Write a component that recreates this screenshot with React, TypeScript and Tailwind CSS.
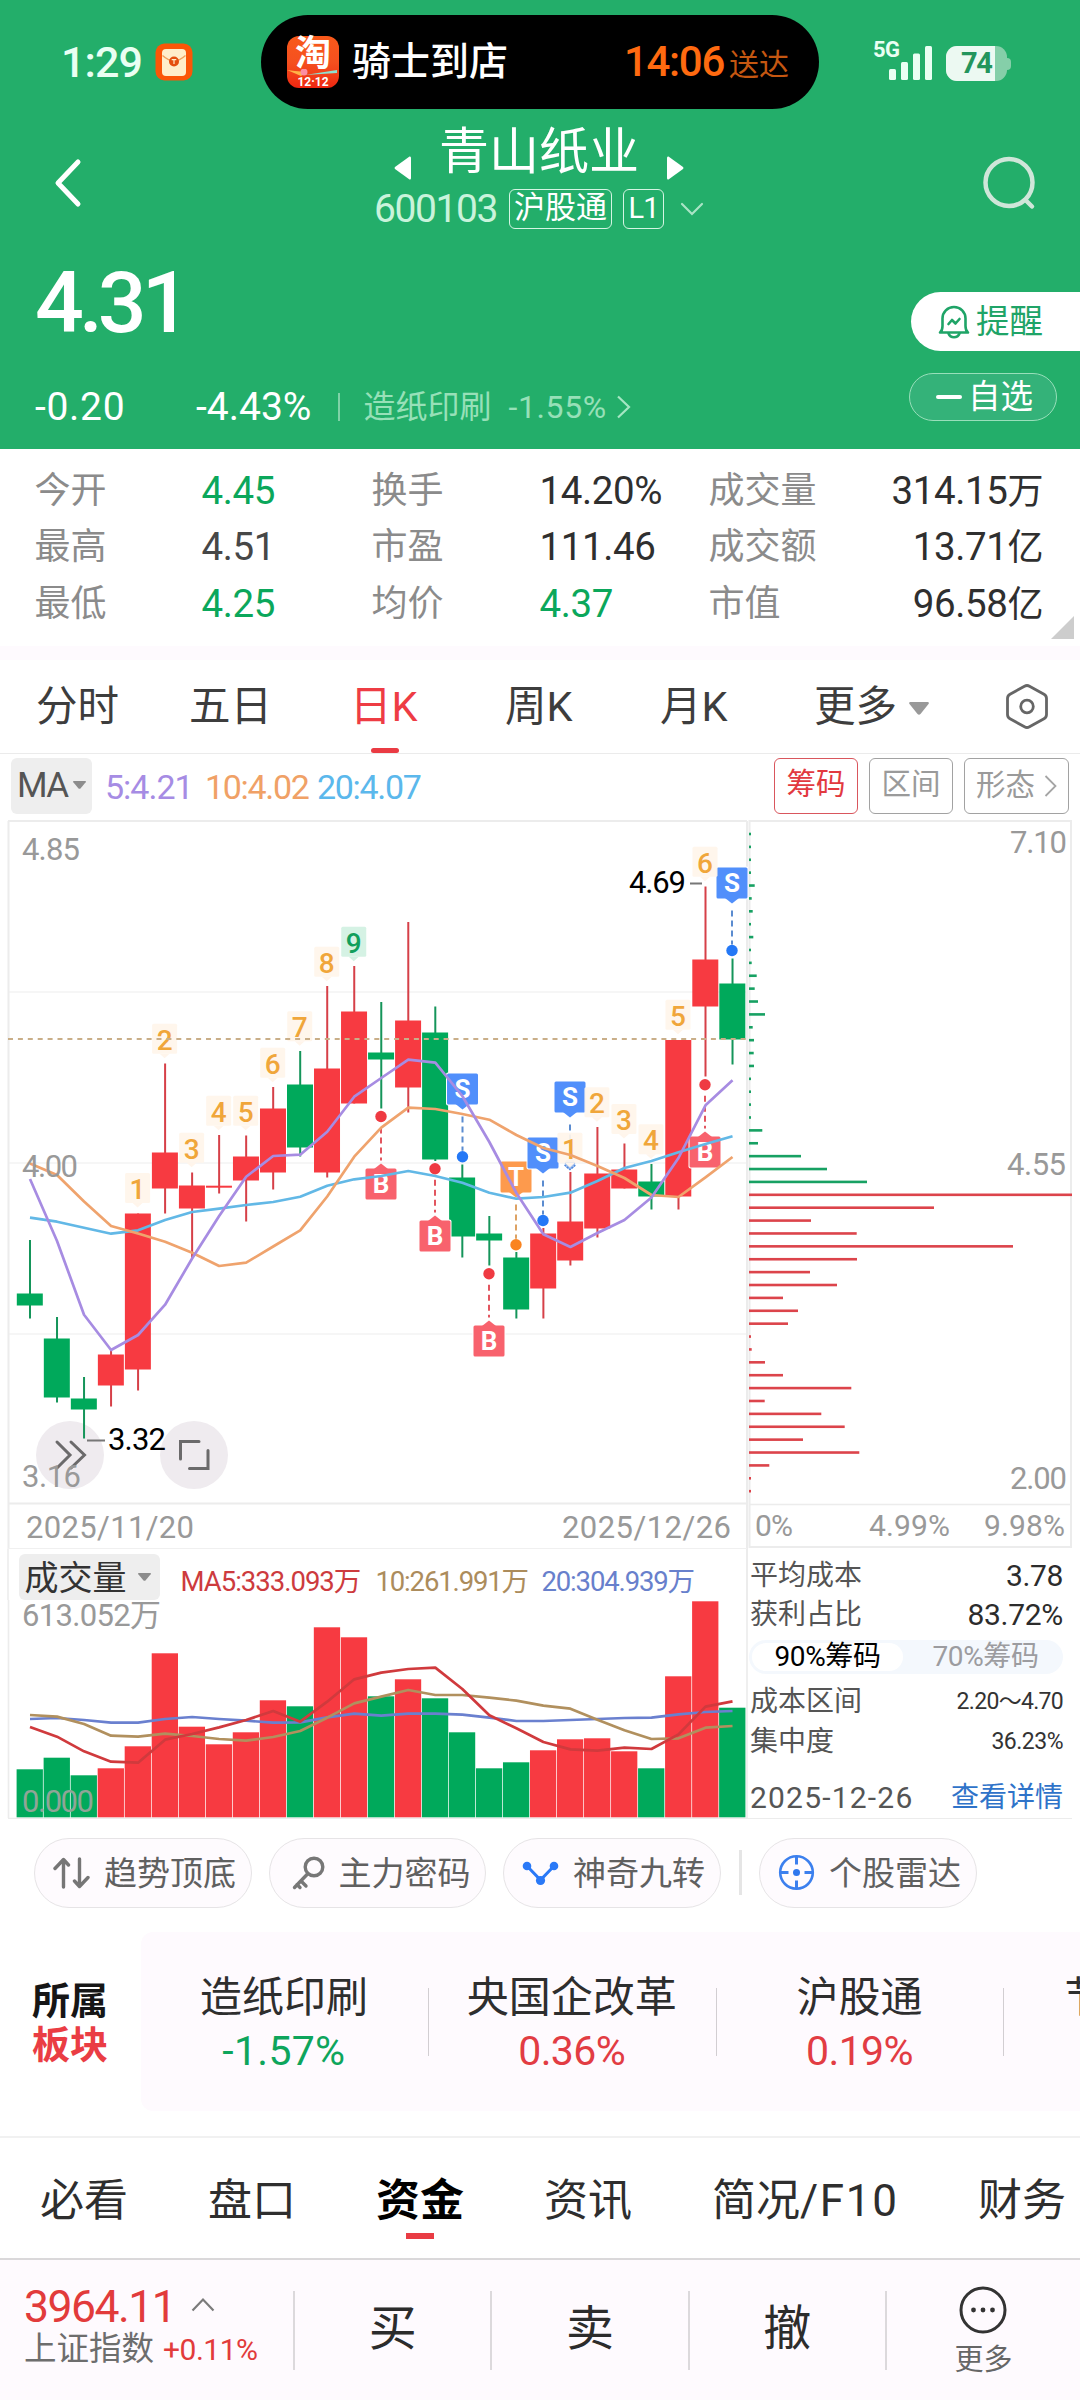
import React from "react";

const RED = "#f73a41";
const GREEN = "#00a95b";

/* ---------- chart data (plot coordinates) ---------- */

type Candle = [up: boolean, high: number, top: number, bottom: number, low: number];

const candles: Candle[] = [
  [false, 1240, 1293.5, 1305.5, 1318.5],
  [false, 1317, 1338.5, 1397.5, 1402.5],
  [false, 1377, 1398.5, 1409.5, 1438.5],
  [true, 1351, 1354.5, 1385.5, 1406.5],
  [true, 1213.5, 1213.5, 1369.5, 1390.5],
  [true, 1063.5, 1152.5, 1188.5, 1213.5],
  [true, 1172.5, 1185.5, 1208.5, 1258],
  [true, 1135, 1185.7, 1187.7, 1193.5],
  [true, 1135.5, 1156.5, 1180.5, 1221.5],
  [true, 1087, 1108.5, 1172.5, 1189.5],
  [false, 1051, 1084.5, 1147.5, 1156.5],
  [true, 986, 1068.5, 1172.5, 1177.5],
  [true, 966, 1011.5, 1103.5, 1103.5],
  [false, 1002, 1052.5, 1059.5, 1108.5],
  [true, 922, 1020.5, 1087.5, 1112.5],
  [false, 1006.5, 1032.5, 1159.5, 1161],
  [false, 1164.5, 1177.5, 1236.5, 1257.5],
  [false, 1216, 1233.5, 1240.5, 1265.5],
  [false, 1252, 1257.5, 1309.5, 1318.5],
  [true, 1228, 1233.5, 1288.5, 1318.5],
  [true, 1172, 1221.5, 1260.5, 1265.5],
  [true, 1127, 1173.5, 1228.5, 1237.5],
  [true, 1143.5, 1169.5, 1188.5, 1188.5],
  [false, 1164, 1181.5, 1196.5, 1209.5],
  [true, 1040, 1040, 1196.5, 1209.5],
  [true, 886.5, 959.5, 1006.5, 1076.5],
  [false, 958.5, 983.5, 1039.5, 1064.5],
];

const ma5 = [1179, 1241, 1314.7, 1350, 1335, 1304.7, 1258.5, 1216, 1176.7, 1156, 1154.7, 1131.7, 1096.7, 1078, 1059.7, 1062.7, 1096, 1142, 1193, 1234.3, 1247, 1233, 1220, 1197.5, 1158, 1105.3, 1080.3];
const ma10 = [1163.5, 1175, 1201.5, 1226, 1233.5, 1241.7, 1252.7, 1266, 1262.7, 1246.5, 1230.3, 1196.5, 1156.7, 1127.7, 1107.7, 1109, 1114, 1119.7, 1135, 1148, 1155, 1166, 1178, 1195, 1197, 1177.3, 1157];
const ma20 = [1217.7, 1221.7, 1227.7, 1233.7, 1230.3, 1220, 1212, 1208.7, 1205, 1202, 1196.7, 1185.7, 1179.3, 1176, 1171, 1176, 1182.7, 1192.7, 1198.7, 1197, 1192.7, 1181, 1168, 1161, 1152.3, 1144, 1136.3];

const volTops = [1769.3, 1757.7, 1775.3, 1768.3, 1746.3, 1653.3, 1726.7, 1744.3, 1732.3, 1700.3, 1706.3, 1627.3, 1637.3, 1696.3, 1679.3, 1698.3, 1732.3, 1768.3, 1762.3, 1750.3, 1739.3, 1738.3, 1751.3, 1768.3, 1676.3, 1601.3, 1707.7];
const volUp = [0, 0, 0, 1, 1, 1, 1, 1, 1, 1, 0, 1, 1, 0, 1, 0, 0, 0, 0, 1, 1, 1, 1, 0, 1, 1, 0];
const v5 = [561, 590, 634, 665, 668, 599, 582, 562, 540, 513, 545, 485, 418, 398, 387, 383, 447, 526, 565, 606, 628, 632, 623, 627, 583, 500, 484];
const v10 = [525, 530, 552, 587, 590, 581, 588, 597, 602, 591, 573, 533, 490, 470, 450, 465, 465, 473, 482, 497, 506, 539, 571, 597, 595, 563, 558];
const v20 = [537, 534, 540, 548, 548, 537, 531, 537, 542, 548, 547, 532, 521, 527, 521, 521, 524, 533, 543, 543, 540, 537, 534, 533, 523, 516, 513];

const chips = [
  2, 2, 2, 2, 5.7, 2.7, 3.7, 2, 4.3, 2, 2.7, 7.7, 5.7, 9, 16, 3.7, 5, 4.7, 5, 2, 2, 2, 2, 13.3, 9, 52, 78, 118,
  323, 185, 62, 107.7, 264, 108, 61, 88, 34, 49, 39, 2, 2.7, 16, 34, 102.3, 15.7, 72.3, 95.7, 54, 110.3, 20.3, 2, 2,
];

/* nine-turn counters: [candle index, box top, digit] */
const counts: [number, number, string][] = [
  [4, 1173, "1"], [5, 1023.7, "2"], [6, 1132.7, "3"], [7, 1095.7, "4"], [8, 1095.7, "5"],
  [9, 1047.7, "6"], [10, 1011.3, "7"], [11, 946.7, "8"], [12, 926.7, "9"],
  [20, 1132.7, "1"], [21, 1087.3, "2"], [22, 1104, "3"], [23, 1124.3, "4"], [24, 999.7, "5"], [25, 846.7, "6"],
];

/* trade marks: x, box top, letter, dot y */
const marks: [number, number, "B" | "S" | "T", number][] = [
  [381, 1168.5, "B", 1116.5],
  [435, 1220.5, "B", 1168.7],
  [462.5, 1073.5, "S", 1156.7],
  [489, 1325.5, "B", 1273.7],
  [516, 1161.5, "T", 1244.7],
  [543, 1137.5, "S", 1220.5],
  [570, 1081.5, "S", 1164],
  [705, 1136.5, "B", 1084.7],
  [732, 867.5, "S", 950.5],
];

const markFill = { B: "#f8626d", S: "#518ffb", T: "#fd9a4d" };
const dotFill = { B: "#ef3a42", S: "#2478f6", T: "#fa8420" };
const dashFill = { B: "#e2555f", S: "#5b8cd0", T: "#dda263" };

const cx = (i: number) => 30 + i * 27.02;
const line = (ys: number[]) => ys.map((y, i) => `${cx(i)},${y}`).join(" ");
const volLine = (ys: number[]) => ys.map((y, i) => `${cx(i)},${1540 + y / 3}`).join(" ");

function Label({ x, y, w, size = 31, fill = "#999", children, weight = 400 }: { x: number; y: number; w: number; size?: number; fill?: string; children: string; weight?: number }) {
  return (
    <text x={x} y={y} textLength={w} fontSize={size} fill={fill} fontWeight={weight}>
      {children}
    </text>
  );
}

function CandleChart() {
  return (
    <svg className="block" width="748" height="729" viewBox="0 820 748 729">
      <g stroke="#f4f4f4" strokeWidth="1.6">
        <path d="M8 992H747M8 1163H747M8 1334H747" />
      </g>
      <g stroke="#ececec" strokeWidth="2" fill="none">
        <path d="M8 821H747M8.500 821V1549M747 821V1549M8 1503.500H747" />
      </g>
      <path d="M8 1549H747" stroke="#f0f0f0" strokeWidth="2" />

      <circle cx="70" cy="1455" r="34" fill="#efebef" />
      <circle cx="194" cy="1455" r="34" fill="#efebef" />
      <g stroke="#6b6a6b" strokeWidth="3" fill="none" strokeLinecap="round">
        <path d="M57 1442L70 1455L57 1468M71 1442L84.500 1455L71 1468" />
        <path d="M180.500 1459V1441.500H199M189.500 1468.500H208V1450.500" />
      </g>

      {candles.map(([up, h, t, b, l], i) => (
        <g key={i} fill={up ? RED : GREEN}>
          <rect x={cx(i) - 1} y={h} width="2" height={l - h} fill={up ? "#d64048" : "#15955a"} />
          <rect x={cx(i) - 13.2} y={t} width="26" height={b - t} />
        </g>
      ))}

      {marks.map(([x, top, k, dot], i) => {
        const below = k === "B";
        const covered = x === 570;
        return (
          <g key={i}>
            <line x1={x} x2={x} y1={below ? dot + 11 : top + 43} y2={below ? top - 8 : dot - 6} stroke={dashFill[k]} strokeWidth="2" strokeDasharray="6 4" />
            {covered ? (
              <g>
                <circle cx={x} cy={dot} r="5.200" fill="#a9c4ef" />
                <path d={`M${x - 5.5} ${dot + 1}L${x} ${dot + 5.5}L${x + 5.5} ${dot + 1}`} fill="none" stroke="#4f88dd" strokeWidth="1.500" strokeDasharray="2 1" />
              </g>
            ) : (
              <circle cx={x} cy={dot} r="5.700" fill={dotFill[k]} />
            )}
            <rect x={x - 16.5} y={top - 1} width="33" height="33" rx="2" fill="#fff" />
            <rect x={x - 15.5} y={top} width="31" height="31" rx="1.500" fill={markFill[k]} />
            <path d={below ? `M${x - 7} ${top + 0.5}L${x} ${top - 5}L${x + 7} ${top + 0.5}Z` : `M${x - 7} ${top + 30.5}L${x} ${top + 36}L${x + 7} ${top + 30.5}Z`} fill={markFill[k]} />
            <text x={x} y={top + 24.5} fontSize="26" fontWeight="700" fill="#fff" textAnchor="middle">{k}</text>
          </g>
        );
      })}

      {counts.map(([i, top, n], k) => {
        const green = n === "9";
        const x = cx(i) - 0.5;
        return (
          <g key={k}>
            <rect x={x - 12.5} y={top} width="25" height="30" rx="1.500" fill={green ? "#d2f1e2" : "#fff5eb"} opacity=".93" />
            <path d={`M${x - 5} ${top + 30}L${x} ${top + 34.5}L${x + 5} ${top + 30}Z`} fill={green ? "#d2f1e2" : "#fff5eb"} />
            <text x={x} y={top + 25.8} fontSize="28" fontWeight="500" textAnchor="middle" fill={green ? "#129f5c" : "#f0a63a"}>{n}</text>
          </g>
        );
      })}

      <path d="M8 1039H747" stroke="#c9ae88" strokeWidth="2" strokeDasharray="5 4.900" />

      <g fill="none" strokeWidth="2.700" strokeLinejoin="round">
        <polyline points={line(ma20)} stroke="#62b8e6" />
        <polyline points={line(ma10)} stroke="#efa36d" />
        <polyline points={line(ma5)} stroke="#a78ce2" />
      </g>

      <Label x={22} y={860} w={58}>4.85</Label>
      <Label x={22} y={1176.5} w={56}>4.00</Label>
      <Label x={22} y={1486.5} w={59}>3.16</Label>
      <path d="M690 883.500H702M87 1440.500H105" stroke="#777" strokeWidth="1.800" />
      <Label x={629} y={893} w={57} fill="#000">4.69</Label>
      <Label x={108} y={1449.5} w={58} fill="#000">3.32</Label>
      <Label x={26} y={1538} w={168}>2025/11/20</Label>
      <Label x={562} y={1538} w={169}>2025/12/26</Label>
    </svg>
  );
}

function ChipChart() {
  return (
    <svg className="block" width="332" height="729" viewBox="748 820 332 729">
      <path d="M749.500 821H1071V1547H749.500Z" fill="none" stroke="#ececec" strokeWidth="2" />
      <path d="M749 1504.500H1071" stroke="#ececec" strokeWidth="1.500" />
      {chips.map((w, i) => (
        <rect key={i} x="749" y={832.7 + i * 12.886} width={w} height="2.600" fill={i < 28 ? "#17a163" : "#dc444b"} />
      ))}
      <Label x={1010} y={853} w={57}>7.10</Label>
      <Label x={1007} y={1174.5} w={59}>4.55</Label>
      <Label x={1010} y={1489} w={57}>2.00</Label>
      <Label x={755} y={1535.5} w={38} size={30}>0%</Label>
      <Label x={869} y={1535.5} w={81} size={30}>4.99%</Label>
      <Label x={984} y={1535.5} w={81} size={30}>9.98%</Label>
    </svg>
  );
}

function VolumeChart() {
  return (
    <svg className="block" width="748" height="219" viewBox="0 1600 748 219">
      <path d="M8.500 1600V1818M8 1818.500H748M747 1600V1818" stroke="#ececec" strokeWidth="1.600" fill="none" />
      {volTops.map((t, i) => (
        <rect key={i} x={cx(i) - 13.4} y={t} width="26.300" height={1817.3 - t} fill={volUp[i] ? RED : GREEN} />
      ))}
      <g fill="none" strokeWidth="2.700" strokeLinejoin="round">
        <polyline points={volLine(v20)} stroke="#6a80cf" />
        <polyline points={volLine(v10)} stroke="#b1905e" />
        <polyline points={volLine(v5)} stroke="#d03a3d" />
      </g>
      <Label x={22} y={1626} w={139}>613.052万</Label>
      <Label x={22} y={1812} w={72} fill="#8fa597">0.000</Label>
    </svg>
  );
}

/* ---------- header ---------- */

function StatusBar() {
  return (
    <div className="flex h-[109px] pt-[15px]">
      <div className="flex h-[94px] w-[261px] items-center pl-[61px]">
        <span className="w-[94px] text-[43px] font-medium leading-none tracking-[-0.900px] text-[#e9fff3]">1:29</span>
        <svg width="38" height="38" viewBox="0 0 38 38">
          <rect x=".5" y=".5" width="37" height="37" rx="9" fill="#fb5607" />
          <rect x="7" y="6" width="24" height="27" rx="4" fill="#ffeeca" />
          <path d="M7.500 12.500C12 16.500 15 18 19 18S26 16.500 30.500 12.500" fill="none" stroke="#f0a15c" strokeWidth="1.400" />
          <circle cx="19" cy="18.500" r="5" fill="#e4500f" />
          <path d="M16.700 16.700H21.300M19 16.700V21" stroke="#ffeeca" strokeWidth="1.200" />
        </svg>
      </div>
      <div className="flex h-[94px] w-[558px] items-center rounded-full bg-black pl-[26px] pr-[30px]">
        <div className="flex h-[52px] w-[52px] flex-col items-center rounded-[12px] bg-linear-to-b from-[#f8591a] via-[#f5501f] to-[#ee2410] text-white">
          <span className="-mt-[3px] text-[36px] font-bold leading-[42px]">淘</span>
          <svg className="-mt-[6px]" width="52" height="7" viewBox="0 0 52 7">
            <path d="M0 1L14 7L20 3L8 2Z" fill="#ffb347" />
            <path d="M18 6L50 1V4Z" fill="#8fe0d0" />
            <circle cx="17" cy="3" r="3.500" fill="#fb8ea4" />
          </svg>
          <span className="text-[12px] font-bold leading-[12px]">12·12</span>
        </div>
        <span className="ml-[13px] flex-1 text-[39px] font-medium leading-none text-white">骑士到店</span>
        <span className="text-[42px] font-medium leading-none tracking-[-1.300px] text-[#ff6a10]">14:06</span>
        <span className="ml-[5px] mt-[6px] text-[30px] leading-none text-[#c55711]">送达</span>
      </div>
      <div className="ml-[54px] flex items-start">
        <span className="mt-[25px] h-[20px] w-[16px] text-[22px] font-bold leading-[20px] tracking-[-0.600px] text-[#e9fff3]">5G</span>
        <svg className="mt-[31px]" width="43" height="34" viewBox="0 0 43 34" fill="#e9fff3">
          <rect x="0" y="23" width="7" height="11" rx="1.500" />
          <rect x="12" y="16" width="7" height="18" rx="1.500" />
          <rect x="24" y="7.500" width="7" height="26.500" rx="1.500" />
          <rect x="36" y="0" width="7" height="34" rx="1.500" />
        </svg>
        <div className="ml-[14px] mt-[31px] flex items-center">
          <div className="flex h-[35px] w-[61px] overflow-hidden rounded-[11px] bg-[#85cfa9]">
            <div className="h-full w-[49px] bg-[#ecf9f2] pl-[15px] text-[29px] font-bold leading-[35px] tracking-[-1.500px] text-[#23955c]">74</div>
          </div>
          <div className="h-[12px] w-[4px] rounded-r-[4px] bg-[#85cfa9]" />
        </div>
      </div>
    </div>
  );
}

function TitleBar() {
  return (
    <div className="flex h-[131px] items-start">
      <svg className="ml-[53px] mt-[49px]" width="29" height="50" viewBox="0 0 29 50">
        <path d="M25 4L5 25L25 46" fill="none" stroke="#fff" strokeWidth="5" strokeLinecap="round" strokeLinejoin="round" />
      </svg>
      <div className="flex flex-1 flex-col items-center pl-[74px] pr-[60px]">
        <div className="mt-[13px] flex h-[60px] items-center">
          <svg className="mt-[32px]" width="17" height="24" viewBox="0 0 17 24">
            <path d="M15.500 0.500Q17 0 17 2V22Q17 24 15.500 23.500L1 13Q0 12 1 11Z" fill="#fff" />
          </svg>
          <span className="mx-[28px] text-[50px] leading-[60px] text-white">青山纸业</span>
          <svg className="mt-[32px]" width="17" height="24" viewBox="0 0 17 24">
            <path d="M1.500 0.500Q0 0 0 2V22Q0 24 1.500 23.500L16 13Q17 12 16 11Z" fill="#fff" />
          </svg>
        </div>
        <div className="mt-[7px] flex h-[40px] items-center">
          <span className="text-[39px] leading-none tracking-[-1.400px] text-[#c9f3db]">600103</span>
          <span className="ml-[12px] h-[40px] w-[103px] rounded-[6px] border-[1.500px] border-[#d5f5e3] text-center text-[31px] leading-[36px] text-white">沪股通</span>
          <span className="ml-[11px] h-[40px] w-[41px] rounded-[6px] border-[1.500px] border-[#d5f5e3] text-center text-[29px] leading-[37px] tracking-[-1px] text-white">L1</span>
          <svg className="ml-[16px]" width="24" height="14" viewBox="0 0 24 14">
            <path d="M2 2L12 12L22 2" fill="none" stroke="#a9e4c5" strokeWidth="2.200" strokeLinecap="round" />
          </svg>
        </div>
      </div>
      <svg className="mr-[44px] mt-[47px]" width="54" height="54" viewBox="0 0 54 54">
        <g fill="none" stroke="#cfe6d9" strokeWidth="4.500" strokeLinecap="round">
          <circle cx="27" cy="26.500" r="23.500" />
          <path d="M43.500 44L50 50.500" />
        </g>
      </svg>
    </div>
  );
}

function PriceBlock() {
  return (
    <div className="flex h-[209px] justify-between">
      <div className="w-[700px] pl-[35px]">
        <div className="mt-[20px] h-[86px] text-[86px] font-medium leading-[86px] tracking-[-5px] text-white">4.31</div>
        <div className="mt-[40px] flex h-[42px] items-center">
          <span className="w-[161px] text-[39px] font-[450] leading-none tracking-[0.700px] text-white">-0.20</span>
          <span className="w-[142px] text-[39px] font-[450] leading-none tracking-[0px] text-white">-4.43%</span>
          <span className="h-[28px] w-[1.500px] bg-[#7fd2a7]" />
          <span className="ml-[24px] text-[32px] leading-none text-[#97e0b8]">造纸印刷</span>
          <span className="ml-[17px] text-[32px] leading-none tracking-[0.600px] text-[#97e0b8]">-1.55%</span>
          <svg className="ml-[9px]" width="15" height="24" viewBox="0 0 15 24">
            <path d="M2 1.500L13 12L2 22.500" fill="none" stroke="#a5e6c3" strokeWidth="2.200" />
          </svg>
        </div>
      </div>
      <div className="flex w-[171px] flex-col">
        <div className="ml-[2px] mt-[52px] flex h-[59px] w-[169px] items-center rounded-l-full bg-white pl-[27px]">
          <svg width="32" height="34" viewBox="0 0 32 34">
            <g fill="none" stroke="#1fa467" strokeWidth="2.600" strokeLinejoin="round" strokeLinecap="round">
              <path d="M2 27.500C4 26 4.500 24 4.500 21V13.500C4.500 7 9.500 2 16 2S27.500 7 27.500 13.500V21C27.500 24 28 26 30 27.500Z" />
              <path d="M10.500 28.500C11.500 31 13.500 32.300 16 32.300S20.500 31 21.500 28.500" />
              <path d="M10.500 19L14 15L17.500 18.500L21.500 14" />
            </g>
          </svg>
          <span className="ml-[6px] text-[33.500px] leading-none text-[#1fa467]">提醒</span>
        </div>
        <div className="mt-[22px] flex h-[48px] w-[148px] items-center rounded-full border-[1.500px] border-[#98dfba] bg-[#34b279] pl-[26px]">
          <span className="h-[4px] w-[26px] rounded-full bg-white" />
          <span className="ml-[6px] text-[32.500px] leading-none text-white">自选</span>
        </div>
      </div>
    </div>
  );
}

/* ---------- quote table ---------- */

const quoteRows = [
  [["今开", "4.45", "text-[#0ba75b]"], ["换手", "14.20%", "text-[#2f2f2f]"], ["成交量", "314.15万", "text-[#2f2f2f]"]],
  [["最高", "4.51", "text-[#474747]"], ["市盈", "111.46", "text-[#2f2f2f]"], ["成交额", "13.71亿", "text-[#2f2f2f]"]],
  [["最低", "4.25", "text-[#0ba75b]"], ["均价", "4.37", "text-[#0ba75b]"], ["市值", "96.58亿", "text-[#2f2f2f]"]],
];

function Quotes() {
  return (
    <div className="relative h-[197px] bg-white pt-[13px]">
      {quoteRows.map((row, i) => (
        <div key={i} className="grid h-[56.500px] grid-cols-[167px_170px_168px_169px_118px_217px] items-center pl-[34.500px] leading-none">
          {row.map(([label, value, color], j) => (
            <React.Fragment key={label}>
              <span className="mt-px text-[36px] text-[#8b8b8b]">{label}</span>
              <span className={`mt-px text-[38.500px] font-[450] tracking-[-0.400px] ${color} ${j === 2 ? "text-right" : ""}`}>
                {value.replace(/[万亿]/, "")}
                {/[万亿]/.test(value) && <span className="text-[36px] font-normal tracking-normal">{value.slice(-1)}</span>}
              </span>
            </React.Fragment>
          ))}
        </div>
      ))}
      <svg className="absolute bottom-[7px] right-[6px]" width="23" height="23" viewBox="0 0 23 23">
        <path d="M23 0V23H0Z" fill="#cdcdcd" />
      </svg>
    </div>
  );
}

const Caret = ({ w, h, fill }: { w: number; h: number; fill: string }) => (
  <svg width={w} height={h} viewBox="0 0 20 13" preserveAspectRatio="none">
    <path d="M1 0H19Q20.500 0.500 19.500 2L11.500 12Q10 13.500 8.500 12L0.500 2Q-0.500 0.500 1 0Z" fill={fill} />
  </svg>
);

function PeriodTabs() {
  return (
    <div className="flex h-[93.500px] items-center border-b-[1.500px] border-[#ebebeb] text-[41.500px] leading-none text-[#3d3d3d]">
      <span className="ml-[36px] w-[153px]">分时</span>
      <span className="w-[161px]">五日</span>
      <div className="flex h-full w-[155px] flex-col">
        <span className="mt-[26px] h-[42px] text-[#ee3c44]">日K</span>
        <span className="ml-[21px] mt-[20px] h-[5px] w-[28px] rounded-full bg-[#ea3b43]" />
      </div>
      <span className="w-[155px]">周K</span>
      <span className="w-[154px]">月K</span>
      <span className="w-[95px]">更多</span>
      <span className="mt-[4px]"><Caret w={20} h={13} fill="#999" /></span>
      <svg className="ml-[76px]" width="44" height="47" viewBox="0 0 44 47">
        <g fill="none" stroke="#666" strokeWidth="2.800" strokeLinejoin="round">
          <path d="M19.500 3.200Q22 1.800 24.500 3.200L39 11.300Q41.500 12.700 41.500 15.500V31.500Q41.500 34.300 39 35.700L24.500 43.800Q22 45.200 19.500 43.800L5 35.700Q2.500 34.300 2.500 31.500V15.500Q2.500 12.700 5 11.300Z" />
          <circle cx="22" cy="23.500" r="6.300" />
        </g>
      </svg>
    </div>
  );
}

function IndicatorRow() {
  return (
    <div className="flex h-[66.500px] items-start pt-[4px] leading-none">
      <div className="ml-[11px] flex h-[56px] w-[81px] items-center rounded-[6px] bg-[#eee] pl-[6px]">
        <span className="text-[35px] tracking-[-1.500px] text-[#555]">MA</span>
        <span className="ml-[5px] mt-[-2px]"><Caret w={13} h={8} fill="#8c8c8c" /></span>
      </div>
      <div className="ml-[13px] flex h-[58px] w-[669px] items-center text-[34px]">
        <span className="w-[100px] tracking-[-1px] text-[#a68ce4]">5:4.21</span>
        <span className="w-[112px] tracking-[-1.300px] text-[#f0a166]">10:4.02</span>
        <span className="tracking-[-1.300px] text-[#5bb8ec]">20:4.07</span>
      </div>
      <span className="h-[56px] w-[84px] rounded-[6px] border-[1.500px] border-[#d9565d] text-center text-[29.500px] leading-[51px] text-[#e2393f]">筹码</span>
      <span className="ml-[11px] h-[56px] w-[84px] rounded-[6px] border-[1.500px] border-[#a2a2a2] text-center text-[29.500px] leading-[51px] text-[#9a9a9a]">区间</span>
      <div className="ml-[11px] flex h-[56px] w-[105px] items-center rounded-[6px] border-[1.500px] border-[#a2a2a2] pl-[11px]">
        <span className="text-[29.500px] leading-[53px] text-[#9a9a9a]">形态</span>
        <svg className="ml-[9px]" width="13" height="24" viewBox="0 0 13 24">
          <path d="M1.500 2L11.500 12L1.500 22" fill="none" stroke="#a5a5a5" strokeWidth="1.800" />
        </svg>
      </div>
    </div>
  );
}

function ChipInfo() {
  return (
    <div className="flex h-[270px] w-[324px] flex-col border-b-[1.500px] border-[#ececec] pl-[2px] pr-[9px] pt-[7px] text-[28px] leading-none text-[#555]">
      <div className="flex h-[40px] items-center justify-between">
        <span>平均成本</span>
        <span className="text-[30px] font-[450] tracking-[-0.400px] text-[#2c2c2c]">3.78</span>
      </div>
      <div className="flex h-[40px] items-center justify-between">
        <span>获利占比</span>
        <span className="text-[30px] font-[450] tracking-[-0.300px] text-[#2c2c2c]">83.72%</span>
      </div>
      <div className="-ml-[1px] mt-[6px] flex h-[34px] items-center rounded-full bg-[#f4f8fd] p-[3px]">
        <span className="h-[28px] w-[151px] rounded-full bg-white text-center text-[28px] leading-[28px] tracking-[-0.400px] text-black">90%筹码</span>
        <span className="flex-1 pl-[8px] text-center text-[28px] leading-[28px] tracking-[-0.400px] text-[#9c9ca0]">70%筹码</span>
      </div>
      <div className="mt-[7px] flex h-[41px] items-center justify-between">
        <span>成本区间</span>
        <span className="text-[23px] tracking-[-0.700px] text-[#333]">2.20～4.70</span>
      </div>
      <div className="flex h-[41px] items-center justify-between">
        <span>集中度</span>
        <span className="text-[23px] tracking-[-0.500px] text-[#333]">36.23%</span>
      </div>
      <div className="mt-[16px] flex h-[41px] items-center justify-between">
        <span className="text-[30px] tracking-[1.200px]">2025-12-26</span>
        <span className="text-[#2f73c9]">查看详情</span>
      </div>
    </div>
  );
}

function VolumeHeader() {
  return (
    <div className="flex h-[51px] w-[748px] items-start border-r-[2px] border-[#ececec] pt-[5px] leading-none">
      <div className="-mt-[5px] ml-[7px] h-[51px] w-[2px] bg-[#f0f0f0]" />
      <div className="ml-[9.500px] flex h-[46px] w-[141px] items-center rounded-[6px] bg-[#eee] pl-[6px]">
        <span className="mt-px text-[34px] text-[#333]">成交量</span>
        <span className="ml-[11px]"><Caret w={13} h={8} fill="#8c8c8c" /></span>
      </div>
      <div className="ml-[21px] mt-[5px] flex h-[46px] items-center text-[27.500px]">
        <span className="w-[195px] tracking-[-1px] text-[#cd3b3e]">MA5:333.093万</span>
        <span className="w-[166px] tracking-[-1.150px] text-[#ac8c5c]">10:261.991万</span>
        <span className="tracking-[-1.150px] text-[#6880cc]">20:304.939万</span>
      </div>
    </div>
  );
}

/* ---------- tools, sectors, tabs, bottom bar ---------- */

function Tool({ icon, label }: { icon: React.ReactNode; label: string }) {
  return (
    <div className="flex h-[69.500px] w-[217.500px] items-center rounded-full border-[1.500px] border-[#e6e4e6] bg-[#fefbfe]">
      <span className="ml-[18px] flex w-[51px]">{icon}</span>
      <span className="mt-[2px] text-[33px] leading-none text-[#606060]">{label}</span>
    </div>
  );
}

function Tools() {
  return (
    <div className="flex h-[113px] items-start pl-[34px] pt-[19px]">
      <Tool
        label="趋势顶底"
        icon={
          <svg width="37" height="32" viewBox="0 0 37 32" fill="none" stroke="#767676" strokeWidth="3.400" strokeLinecap="round" strokeLinejoin="round">
            <path d="M10.500 30V3M2 11.500L10.500 2.500L15.500 8M26.500 2V29M21.500 24L26.500 29.500L35 20.500" />
          </svg>
        }
      />
      <span className="w-[17px]" />
      <Tool
        label="主力密码"
        icon={
          <svg className="ml-[4px]" width="33" height="34" viewBox="0 0 33 34" fill="none" stroke="#777" strokeWidth="3.400" strokeLinecap="round" strokeLinejoin="round">
            <circle cx="22" cy="11" r="8.800" />
            <path d="M15.500 18L2.500 31.500M9 25L14 30M5 28.500L8 31.500" />
          </svg>
        }
      />
      <span className="w-[17px]" />
      <Tool
        label="神奇九转"
        icon={
          <svg width="37" height="26" viewBox="0 0 37 26">
            <path d="M5 6L18.500 20L32 6" fill="none" stroke="#2a79f7" strokeWidth="3" />
            <g fill="#2a79f7"><circle cx="5" cy="6" r="4.300" /><circle cx="18.500" cy="20.500" r="4.600" /><circle cx="32" cy="6" r="4.300" /></g>
          </svg>
        }
      />
      <span className="ml-[18px] mt-[12px] h-[45px] w-[3px] bg-[#e5e5e5]" />
      <span className="w-[17.500px]" />
      <Tool
        label="个股雷达"
        icon={
          <svg width="37" height="37" viewBox="0 0 37 37" fill="none" stroke="#3c80ee" strokeWidth="2.600">
            <circle cx="18.500" cy="18.500" r="16.300" />
            <path d="M18.500 2V10.500M18.500 26.500V35M2 18.500H10.500M26.500 18.500H35" strokeWidth="3" />
            <circle cx="18.500" cy="18.500" r="3.500" fill="#2f78ee" stroke="none" />
          </svg>
        }
      />
    </div>
  );
}

const sectors = [
  ["造纸印刷", "-1.57%", "text-[#0ea55c] tracking-[0.300px]"],
  ["央国企改革", "0.36%", "text-[#e23c43] tracking-[-0.600px]"],
  ["沪股通", "0.19%", "text-[#e23c43] tracking-[-0.600px]"],
];

function Sectors() {
  return (
    <div className="flex h-[179px]">
      <div className="w-[141px] pl-[32px] pt-[47px] text-[38px] font-bold leading-[44px]">
        <div className="text-[#161616]">所属</div>
        <div className="text-[#ea3d44]">板块</div>
      </div>
      <div className="flex flex-1 overflow-hidden rounded-l-[12px] bg-[#fefafe]">
        {sectors.map(([name, pct, color]) => (
          <div key={name} className="relative flex w-[287.800px] shrink-0 flex-col items-center">
            <span className="-ml-[2px] mt-[45px] text-[42px] leading-[42px] text-[#2e2e2e]">{name}</span>
            <span className={`-ml-[2px] mt-[11px] text-[41px] font-[450] leading-[42px] ${color}`}>{pct}</span>
            <span className="absolute right-0 top-[56px] h-[68px] w-px bg-[#d2ced2]" />
          </div>
        ))}
        <span className="ml-[60px] mt-[45px] text-[42px] leading-[42px] text-[#2e2e2e]">节</span>
      </div>
    </div>
  );
}

function SectionTabs() {
  return (
    <div className="mt-[25px] flex h-[122px] border-t-2 border-[#f1f1f1] pt-[41px] text-[44px] leading-[44px] text-[#2e2e2e]">
      <span className="ml-[40px] w-[168px]">必看</span>
      <span className="w-[168px]">盘口</span>
      <div className="flex w-[168px] flex-col">
        <span className="h-[44px] font-bold text-black">资金</span>
        <span className="ml-[29.500px] mt-[10px] h-[6px] w-[28.500px] bg-[#e93c44]" />
      </div>
      <span className="w-[168px]">资讯</span>
      <span className="w-[266px] shrink-0">
        简况<span className="tracking-[1.700px]">/F10</span>
      </span>
      <span className="shrink-0">财务</span>
    </div>
  );
}

function BottomBar() {
  return (
    <div className="flex h-[142px] border-t-2 border-[#dad8da] bg-[#fefafe]">
      <div className="w-[293px] pl-[24px] pt-[26px]">
        <div className="flex h-[42px] items-center">
          <span className="text-[44.500px] font-[450] leading-none tracking-[-1.500px] text-[#e23b3b]">3964.11</span>
          <svg className="ml-[16px] mt-[-6px]" width="24" height="15" viewBox="0 0 24 15">
            <path d="M1.500 13.500L12 2.500L22.500 13.500" fill="none" stroke="#7b7b7b" strokeWidth="2.200" />
          </svg>
        </div>
        <div className="mt-[1px] flex h-[40px] items-center">
          <span className="text-[32.500px] leading-none text-[#6d6d6d]">上证指数</span>
          <span className="ml-[9px] mt-[2px] text-[30px] font-[450] leading-none tracking-[-0.500px] text-[#e23b3b]">+0.11%</span>
        </div>
      </div>
      {["买", "卖", "撤"].map((t) => (
        <div key={t} className="flex h-[138px] w-[197.300px] items-center">
          <span className="mt-[2px] h-[79px] w-[2px] bg-[#dcd9dc]" />
          <span className="flex-1 text-center text-[48px] leading-none text-[#2c2c2c]">{t}</span>
        </div>
      ))}
      <div className="flex h-[138px] flex-1 items-center">
        <span className="mt-[2px] h-[79px] w-[2px] bg-[#dcd9dc]" />
        <div className="flex flex-1 flex-col items-center">
          <svg className="mt-[2px]" width="48" height="48" viewBox="0 0 48 48">
            <circle cx="24" cy="24" r="22" fill="none" stroke="#333" strokeWidth="3" />
            <g fill="#333"><circle cx="14.500" cy="24" r="2.400" /><circle cx="24" cy="24" r="2.400" /><circle cx="33.500" cy="24" r="2.400" /></g>
          </svg>
          <span className="mt-[11px] text-[29px] leading-[30px] text-[#666]">更多</span>
        </div>
      </div>
    </div>
  );
}

export default function App() {
  return (
    <div className="h-[2400px] w-[1080px] overflow-hidden bg-white font-['Roboto','Noto_Sans_CJK_SC',sans-serif]">
      <header className="h-[449px] bg-[#23ae6a]">
        <StatusBar />
        <TitleBar />
        <PriceBlock />
      </header>
      <Quotes />
      <div className="h-[14px] bg-[#fefafe]" />
      <PeriodTabs />
      <IndicatorRow />
      <div className="flex h-[999px]">
        <div>
          <CandleChart />
          <VolumeHeader />
          <VolumeChart />
        </div>
        <div>
          <ChipChart />
          <ChipInfo />
        </div>
      </div>
      <Tools />
      <Sectors />
      <SectionTabs />
      <BottomBar />
    </div>
  );
}
